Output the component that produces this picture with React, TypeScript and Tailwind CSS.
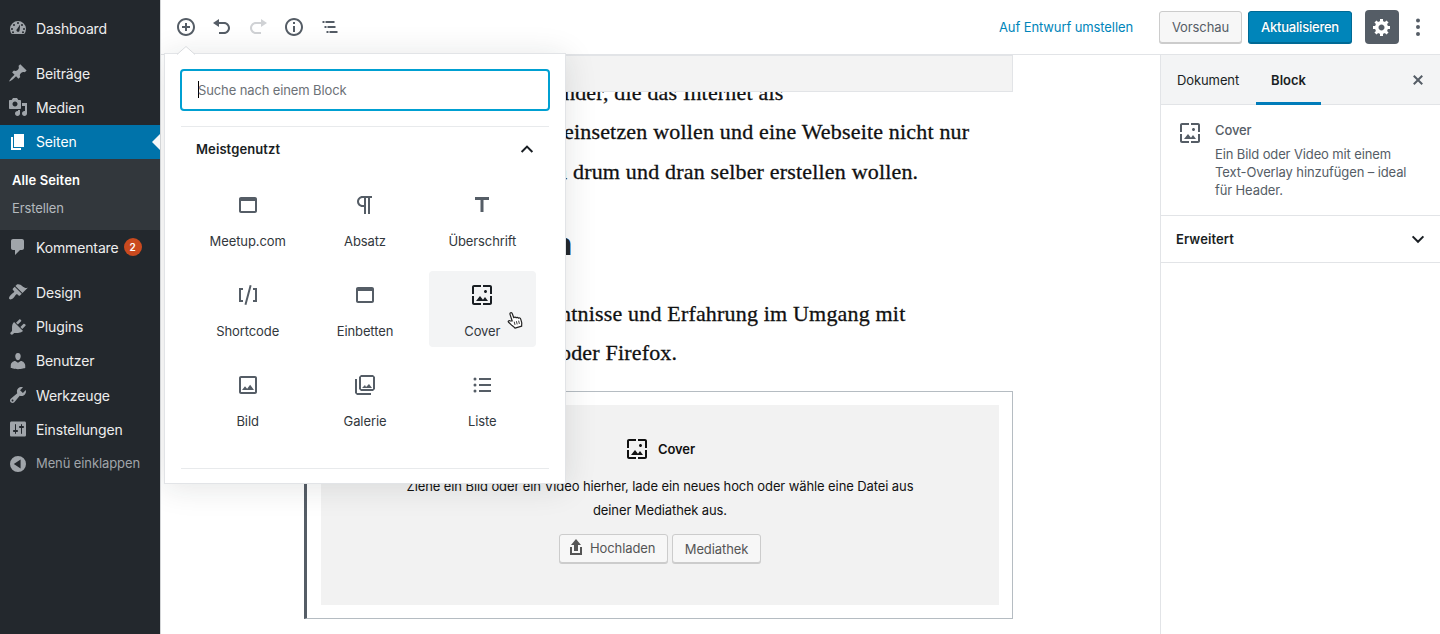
import type { ReactNode } from "react";

const ICONS = {
  dashboard:
    "M3.76 16h12.48A8 8 0 1 0 3.76 16zM10 4a1 1 0 1 1 0 2 1 1 0 0 1 0-2zM6 6a1 1 0 1 1 0 2 1 1 0 0 1 0-2zm8 0a1 1 0 1 1 0 2 1 1 0 0 1 0-2zm-5.37 5.55c.48-.5 3.47-5.15 3.47-5.15s-.36 5.9-.68 6.5c-.35.8-1.25 1.1-2 .8-.9-.35-1.3-1.4-.79-2.15zM4 10a1 1 0 1 1 0 2 1 1 0 0 1 0-2zm12 0a1 1 0 1 1 0 2 1 1 0 0 1 0-2zM5 13.3a1 1 0 1 1 0 2 1 1 0 0 1 0-2zm10 0a1 1 0 1 1 0 2 1 1 0 0 1 0-2z",
  post: "M10.44 3.02l1.82-1.82 6.36 6.35-1.83 1.82c-1.05-.68-2.48-.57-3.41.36l-.75.75c-.92.93-1.04 2.35-.35 3.41l-1.83 1.82-2.41-2.41-2.8 2.79c-.42.42-3.38 2.71-3.8 2.29s1.86-3.39 2.28-3.81l2.79-2.79L4.1 9.36l1.83-1.82c1.05.69 2.48.57 3.4-.36l.75-.75c.93-.92 1.05-2.35.36-3.41z",
  media:
    "M13 11V4c0-.55-.45-1-1-1h-1.67L9 1H5L3.67 3H2c-.55 0-1 .45-1 1v7c0 .55.45 1 1 1h10c.55 0 1-.45 1-1zM7 4.5c1.38 0 2.5 1.12 2.5 2.5S8.38 9.5 7 9.5 4.5 8.38 4.5 7 5.62 4.5 7 4.5zM14 6h5v10.5c0 1.38-1.12 2.5-2.5 2.5S14 17.88 14 16.5s1.12-2.5 2.5-2.5c.17 0 .34.02.5.05V9h-3V6zm-4 8.05V13h2v3.5c0 1.38-1.12 2.5-2.5 2.5S7 17.88 7 16.5 8.12 14 9.5 14c.17 0 .34.02.5.05z",
  page: "M6 15V2h10v13H6zm-1 1h8v2H3V5h2v11z",
  comments:
    "M5 2h9c1.1 0 2 .9 2 2v7c0 1.1-.9 2-2 2h-2l-5 5v-5H5c-1.1 0-2-.9-2-2V4c0-1.1.9-2 2-2z",
  appearance:
    "M14.48 11.06L7.41 3.99l1.5-1.5c.5-.56 2.3-.47 3.51.32 1.21.8 1.43 1.28 2.91 2.1 1.18.64 2.45 1.26 4.45.85zm-.71.71L6.7 4.7 4.93 6.47c-.39.39-.39 1.02 0 1.41l1.06 1.06c.39.39.39 1.03 0 1.42-.6.6-1.43 1.11-2.21 1.69-.35.26-.7.53-1.01.84C1.43 14.23.4 16.08 1.4 17.07c.99 1 2.84-.03 4.18-1.36.31-.31.58-.66.85-1.02.57-.78 1.08-1.61 1.69-2.21.39-.39 1.02-.39 1.41 0l1.06 1.06c.39.39 1.02.39 1.41 0z",
  plugins:
    "M13.11 4.36L9.87 7.6 8 5.73l3.24-3.24c.35-.34 1.05-.2 1.56.32.52.51.66 1.21.31 1.55zm-8 1.77l.91-1.12 9.01 9.01-1.19.84c-.71.71-2.63 1.16-3.82 1.16H6.14L4.9 17.26c-.59.59-1.54.59-2.12 0-.59-.58-.59-1.53 0-2.12l1.24-1.24v-3.88c0-1.13.4-3.19 1.09-3.89zm7.26 3.97l3.24-3.24c.34-.35 1.04-.21 1.55.31.52.51.66 1.21.31 1.55l-3.24 3.25z",
  users:
    "M10 9.25c-2.27 0-2.73-3.44-2.73-3.44C7 4.02 7.82 2 9.97 2c2.16 0 2.98 2.02 2.71 3.81 0 0-.41 3.44-2.68 3.44zm0 2.57L12.72 10c2.39 0 4.52 2.33 4.52 4.53v2.49s-3.65 1.13-7.24 1.13c-3.65 0-7.24-1.13-7.24-1.13v-2.49c0-2.25 1.94-4.48 4.47-4.48z",
  tools:
    "M16.68 9.77c-1.34 1.34-3.3 1.67-4.95.99l-5.41 6.52c-.99.99-2.59.99-3.58 0s-.99-2.59 0-3.57l6.52-5.42c-.68-1.65-.35-3.61.99-4.95 1.28-1.28 3.12-1.62 4.72-1.06l-2.89 2.89 2.82 2.82 2.86-2.87c.53 1.58.18 3.39-1.08 4.65zM3.81 16.21c.4.39 1.04.39 1.43 0 .4-.4.4-1.04 0-1.43-.39-.4-1.03-.4-1.43 0-.39.39-.39 1.03 0 1.43z",
  settings:
    "M18 16V4c0-.9-.5-1.6-1.6-1.6H3.6C2.5 2.4 2 3.1 2 4v12c0 1 .6 1.6 1.6 1.6h12.8c1 0 1.6-.6 1.6-1.6zM8 11h1c.55 0 1 .45 1 1s-.45 1-1 1H8v1.5c0 .28-.22.5-.5.5s-.5-.22-.5-.5V13H6c-.55 0-1-.45-1-1s.45-1 1-1h1V5.5c0-.28.22-.5.5-.5s.5.22.5.5V11zm5-2h-1c-.55 0-1-.45-1-1s.45-1 1-1h1V5.5c0-.28.22-.5.5-.5s.5.22.5.5V7h1c.55 0 1 .45 1 1s-.45 1-1 1h-1v5.5c0 .28-.22.5-.5.5s-.5-.22-.5-.5V9z",
  collapse:
    "M10 2a8 8 0 1 1 0 16 8 8 0 0 1 0-16zm2.6 3.6L5.8 10l6.8 4.4z",
  insert:
    "M10 1c-5 0-9 4-9 9s4 9 9 9 9-4 9-9-4-9-9-9zm0 16c-3.9 0-7-3.1-7-7s3.1-7 7-7 7 3.1 7 7-3.1 7-7 7zm1-11H9v3H6v2h3v3h2v-3h3V9h-3V6z",
  undo: "M12 5H7V2L1 6l6 4V7h5c2.2 0 4 1.8 4 4s-1.8 4-4 4H7v2h5c3.3 0 6-2.7 6-6s-2.7-6-6-6z",
  redo: "M8 5h5V2l6 4-6 4V7H8c-2.2 0-4 1.8-4 4s1.8 4 4 4h5v2H8c-3.3 0-6-2.7-6-6s2.7-6 6-6z",
  info: "M10 1c-5 0-9 4-9 9s4 9 9 9 9-4 9-9-4-9-9-9zm0 16c-3.9 0-7-3.1-7-7s3.1-7 7-7 7 3.1 7 7-3.1 7-7 7zM9 9h2v6H9zm0-4h2v2H9z",
  outline:
    "M2.5 4h2v2h-2zm3 0h9v2h-9zM4.5 9h2v2h-2zm3 0h8v2h-8zM6.5 14h2v2h-2zm3 0h8v2h-8z",
  generic:
    "M18 12h-2.18c-.17.7-.44 1.35-.81 1.93l1.54 1.54-2.1 2.1-1.54-1.54c-.58.36-1.23.63-1.91.79V19H8v-2.18c-.68-.16-1.33-.43-1.91-.79l-1.54 1.54-2.12-2.12 1.54-1.54c-.36-.58-.63-1.23-.79-1.91H1V9.03h2.17c.16-.7.44-1.35.8-1.94L2.43 5.55l2.1-2.1 1.54 1.54c.58-.37 1.24-.64 1.93-.81V2h3v2.18c.68.16 1.33.43 1.91.79l1.54-1.54 2.12 2.12-1.54 1.54c.36.59.64 1.24.8 1.94H18V12zm-8.5 1.5c1.66 0 3-1.34 3-3s-1.34-3-3-3-3 1.34-3 3 1.34 3 3 3z",
  more: "M10 1.4a2 2 0 1 1 0 4 2 2 0 0 1 0-4zm0 6.6a2 2 0 1 1 0 4 2 2 0 0 1 0-4zm0 6.9a2 2 0 1 1 0 4 2 2 0 0 1 0-4z",
  close:
    "M14.95 6.46L11.41 10l3.54 3.54-1.41 1.41L10 11.42l-3.53 3.53-1.42-1.42L8.58 10 5.05 6.47l1.42-1.42L10 8.58l3.54-3.53z",
  upload: "M8 14V8H5l5-6 5 6h-3v6H8zm-2 2v-6H4v8h12.01v-8H14v6H6z",
};

const BLOCK_ICONS = {
  cover:
    "M4 4h7V2H4c-1.1 0-2 .9-2 2v7h2V4zm6 9l-4 5h12l-3-4-2.03 2.71L10 13zm7-4.5c0-.83-.67-1.5-1.5-1.5S14 7.67 14 8.5s.67 1.5 1.5 1.5S17 9.33 17 8.5zM20 2h-7v2h7v7h2V4c0-1.1-.9-2-2-2zm0 18h-7v2h7c1.1 0 2-.9 2-2v-7h-2v7zM4 13H2v7c0 1.1.9 2 2 2h7v-2H4v-7z",
  embed:
    "M19 4H5c-1.11 0-2 .9-2 2v12c0 1.1.89 2 2 2h14c1.1 0 2-.9 2-2V6c0-1.1-.89-2-2-2zm0 14H5V8h14v10z",
  paragraph:
    "M11 5v7H9.5C7.6 12 6 10.4 6 8.5S7.6 5 9.5 5H11m8-2H9.5C6.5 3 4 5.5 4 8.5S6.5 14 9.5 14H11v7h2V5h2v16h2V5h2V3z",
  heading: "M5 4v3h5.5v12h3V7H19V4z",
  shortcode:
    "M8.5 21.4l1.9.5 5.2-19.3-1.9-.5-5.2 19.3zM3 19h4v-2H5V7h2V5H3v14zM17 5v2h2v10h-2v2h4V5h-4z",
  image:
    "M19 5v14H5V5h14m0-2H5c-1.1 0-2 .9-2 2v14c0 1.1.9 2 2 2h14c1.1 0 2-.9 2-2V5c0-1.1-.9-2-2-2zm-4.86 8.86l-3 3.87L9 13.14 6 17h12l-3.86-5.14z",
  gallery:
    "M20 4v12H8V4h12m0-2H8L6 4v12l2 2h12l2-2V4l-2-2zM12 12l1 2 3-3 3 4H9zM2 6v14l2 2h14v-2H4V6H2z",
  list: "M9 19h12v-2H9v2zm0-6h12v-2H9v2zm0-8v2h12V5H9zM5 4.5a1.5 1.5 0 1 0 0 3 1.5 1.5 0 0 0 0-3zm0 6a1.5 1.5 0 1 0 0 3 1.5 1.5 0 0 0 0-3zm0 6a1.5 1.5 0 1 0 0 3 1.5 1.5 0 0 0 0-3z",
};

function Icon({ name, className = "size-5" }: { name: keyof typeof ICONS; className?: string }) {
  return (
    <svg viewBox="0 0 20 20" fill="currentColor" className={`shrink-0 ${className}`}>
      <path fillRule="evenodd" d={ICONS[name]} />
    </svg>
  );
}

function BlockIcon({ name, className = "" }: { name: keyof typeof BLOCK_ICONS; className?: string }) {
  return (
    <svg viewBox="0 0 24 24" fill="currentColor" className={`size-6 shrink-0 ${className}`}>
      <path fillRule={name === "heading" ? "nonzero" : "evenodd"} d={BLOCK_ICONS[name]} />
    </svg>
  );
}

function Chevron({ up = false }: { up?: boolean }) {
  return (
    <svg viewBox="0 0 20 20" fill="none" stroke="currentColor" strokeWidth="2" className="size-5">
      <path d={up ? "M4.6 12L10 6.6l5.4 5.4" : "M4.6 7.4L10 12.8l5.4-5.4"} />
    </svg>
  );
}

function MenuItem({ icon, children }: { icon: keyof typeof ICONS; children: ReactNode }) {
  return (
    <li className="flex h-[34.2px] items-center gap-2 pl-2">
      <Icon name={icon} className="size-5 text-[#a0a5aa]" />
      <span className="flex items-center text-[14px] tracking-[-0.14px]">{children}</span>
    </li>
  );
}

function Sidebar() {
  return (
    <nav className="relative z-20 w-[160px] shrink-0 bg-[#23282d] pt-[11px] text-[#eee] shadow-[1px_0_0_#d3d5d7]">
      <ul>
        <MenuItem icon="dashboard">Dashboard</MenuItem>
      </ul>
      <ul className="mt-[11px]">
        <MenuItem icon="post">Beiträge</MenuItem>
        <MenuItem icon="media">Medien</MenuItem>
        <li className="relative flex h-[34px] items-center gap-2 bg-[#0073aa] pl-2 text-white">
          <Icon name="page" />
          <span className="text-[14px] tracking-[-0.14px]">Seiten</span>
          <svg viewBox="0 0 8 16" className="absolute top-[9px] right-0 h-4 w-2" fill="#f8f8f8">
            <path d="M8 0v16L0 8z" />
          </svg>
        </li>
      </ul>
      <ul className="h-[71.6px] bg-[#32373c] pt-[7px] pl-3 text-[13px] leading-7">
        <li className="font-semibold tracking-[0.1px] text-white">Alle Seiten</li>
        <li className="tracking-[-0.1px] text-[#b4b9be]">Erstellen</li>
      </ul>
      <ul>
        <MenuItem icon="comments">
          Kommentare
          <span className="ml-[5px] flex size-[18px] items-center justify-center rounded-full bg-[#ca4a1f] text-[10px] font-semibold text-white">
            2
          </span>
        </MenuItem>
      </ul>
      <ul className="mt-[11px]">
        <MenuItem icon="appearance">Design</MenuItem>
        <MenuItem icon="plugins">Plugins</MenuItem>
        <MenuItem icon="users">Benutzer</MenuItem>
        <MenuItem icon="tools">Werkzeuge</MenuItem>
        <MenuItem icon="settings">Einstellungen</MenuItem>
      </ul>
      <div className="flex h-[35px] items-center gap-2 pl-2 text-[#a0a5aa]">
        <Icon name="collapse" />
        <span className="text-[13px] tracking-[-0.1px]">Menü einklappen</span>
      </div>
    </nav>
  );
}

function TopBar() {
  return (
    <header className="flex h-[55px] shrink-0 items-center justify-between border-b border-[#e2e4e7] pr-[12px] pl-[16px] text-[#555d66]">
      <div className="flex gap-4">
        <Icon name="insert" />
        <Icon name="undo" />
        <Icon name="redo" className="size-5 text-[#d0d2d5]" />
        <Icon name="info" />
        <Icon name="outline" />
      </div>
      <div className="flex items-center text-[13px] tracking-[-0.1px]">
        <span className="mr-[26px] pt-px text-[#0085ba]">Auf Entwurf umstellen</span>
        <button className="mr-[6px] mb-px h-[32px] w-[83px] rounded-[3px] border border-[#ccc] bg-[#f7f7f7] pt-[3px] shadow-[0_1px_0_#ccc]">
          Vorschau
        </button>
        <button className="mr-[13px] mb-px h-[32px] w-[104px] rounded-[3px] border border-[#006a95] bg-[#0085ba] pt-[3px] font-medium tracking-[-0.22px] text-white shadow-[0_1px_0_#006a95] [text-shadow:0_-1px_1px_#006a95]">
          Aktualisieren
        </button>
        <span className="mr-[9px] flex size-[34px] items-center justify-center rounded-[4px] bg-[#555d66] text-white">
          <Icon name="generic" />
        </span>
        <Icon name="more" />
      </div>
    </header>
  );
}

function EditorCanvas() {
  return (
    <main className="w-[1000px] shrink-0 overflow-hidden pl-[143px] text-[#111]">
      <div className="relative z-[1] h-[37px] w-[710px] border border-[#e2e4e7] bg-[#f3f3f3]" />
      <div className="-mt-[19px] pl-[252px] font-['Liberation_Serif',serif] text-[22px] leading-[39.3px] tracking-[0.18px] whitespace-nowrap [-webkit-text-stroke:0.3px_#111]">
        <p className="pl-[9px]">nder, die das Internet als</p>
        <p className="pl-[9px]">einsetzen wollen und eine Webseite nicht nur</p>
        <p className="-ml-[5px]">m drum und dran selber erstellen wollen.</p>
      </div>
      <h2 className="mt-[33px] w-[269px] text-right text-[30px] leading-[40px] font-extrabold text-[#23282d]">n</h2>
      <div className="mt-[30px] pl-[252px] font-['Liberation_Serif',serif] text-[22px] leading-[39.3px] tracking-[0.18px] whitespace-nowrap [-webkit-text-stroke:0.3px_#111]">
        <p className="pl-[5px]">ntnisse und Erfahrung im Umgang mit</p>
        <p className="pl-[5px]">oder Firefox.</p>
      </div>
      <section className="mt-[19px] ml-px h-[228px] w-[709px] border border-l-[3px] border-[#b5bcc2] border-l-[#555d66] py-[13px] pr-[13px] pl-[14px]">
        <div className="flex h-[200px] flex-col items-center bg-[#f2f2f2] pt-[32px]">
          <div className="flex items-center gap-[9px] text-[13px] font-semibold tracking-[-0.1px]">
            <BlockIcon name="cover" />
            <span className="pt-px">Cover</span>
          </div>
          <p className="mt-[14px] w-[520px] text-center text-[13px] leading-[23.6px] tracking-[-0.1px]">
            Ziehe ein Bild oder ein Video hierher, lade ein neues hoch oder wähle eine Datei aus deiner Mediathek aus.
          </p>
          <div className="mt-[11px] flex gap-1 text-[13px] tracking-[-0.1px] text-[#555]">
            <button className="flex h-[29px] w-[109px] items-center gap-1 rounded-[3px] border border-[#ccc] bg-[#f7f7f7] pl-[6px] shadow-[0_1px_0_#ccc]">
              <Icon name="upload" className="-mt-[3px] size-5" />
              <span className="pt-px">Hochladen</span>
            </button>
            <button className="h-[29px] w-[89px] rounded-[3px] border border-[#ccc] bg-[#f7f7f7] pt-[3px] shadow-[0_1px_0_#ccc]">
              Mediathek
            </button>
          </div>
        </div>
      </section>
    </main>
  );
}

function SettingsPanel() {
  return (
    <aside className="w-[280px] shrink-0 border-l border-[#e2e4e7] text-[13px]">
      <div className="flex h-[50px] items-center border-b border-[#e2e4e7] bg-[#f3f4f5] pr-[12px] pl-4 text-[#191e23]">
        <span className="w-[79px] pt-[3px] tracking-[-0.1px]">Dokument</span>
        <span className="flex h-[50px] w-[65px] items-center justify-center border-b-[3px] border-[#007cba] pt-[6px] font-semibold">
          Block
        </span>
        <Icon name="close" className="ml-auto size-5 text-[#555d66]" />
      </div>
      <div className="flex h-[111px] gap-[13px] border-b border-[#e2e4e7] pt-4 pl-[17px] leading-[18px] tracking-[-0.12px] text-[#555d66]">
        <BlockIcon name="cover" />
        <div>
          <p className="mb-[6px] font-medium">Cover</p>
          <p className="w-[210px]">
            Ein Bild oder Video mit einem
            <br />
            Text-Overlay hinzufügen – ideal
            <br />
            für Header.
          </p>
        </div>
      </div>
      <div className="flex h-[47px] items-center justify-between border-b border-[#e2e4e7] pr-[12px] pl-[15px] font-semibold tracking-[0.1px] text-[#191e23]">
        <span className="pt-[2px]">Erweitert</span>
        <Chevron />
      </div>
    </aside>
  );
}

const BLOCKS: { icon: keyof typeof BLOCK_ICONS; label: string }[] = [
  { icon: "embed", label: "Meetup.com" },
  { icon: "paragraph", label: "Absatz" },
  { icon: "heading", label: "Überschrift" },
  { icon: "shortcode", label: "Shortcode" },
  { icon: "embed", label: "Einbetten" },
  { icon: "cover", label: "Cover" },
  { icon: "image", label: "Bild" },
  { icon: "gallery", label: "Galerie" },
  { icon: "list", label: "Liste" },
];

function HandCursor() {
  return (
    <svg viewBox="0 0 16 18" className="absolute top-[40px] left-[78px] h-[18px] w-4">
      <path
        d="M5.2 10L3.1 3.6C2.4 1.6 4.6.8 5.3 2.7l1.5 4c.7-.9 1.9-.7 2.3.1.7-.8 1.9-.5 2.3.4.9-.6 2-.1 2.3.9l.9 3c.4 1.3-.1 2.4.1 4.1l-6.7 1.9c-1-1.6-2.2-2-3.4-3L1.6 11.3c-1-1.1.4-2.2 1.4-1.5z"
        fill="#fff"
        stroke="#222"
        strokeWidth="1.2"
        strokeLinejoin="round"
      />
      <path d="M7.2 10.7l.8 3.2M9.4 10.2l.8 3.2M11.6 9.7l.8 3.2" stroke="#222" strokeWidth="0.9" />
    </svg>
  );
}

function Inserter() {
  return (
    <div className="absolute top-[53px] left-[164px] z-10 h-[431px] w-[402px] border border-[#e2e4e7] bg-white px-[15px] pt-[14.5px] shadow-[0_3px_30px_rgba(25,30,35,0.12)]">
      <svg viewBox="0 0 18 9" className="absolute -top-[9px] left-[12px] h-[10px] w-[18px]" fill="#fff">
        <path d="M0 9l9-8 9 8" stroke="#d9dbde" />
      </svg>
      <div className="flex h-[42px] items-center rounded-[4px] border-2 border-[#00a0d2] pl-4 text-[13px] tracking-[-0.12px] text-[#6c7177]">
        <span className="-mr-px h-[17px] w-px bg-black" />
        <span className="pt-[2px]">Suche nach einem Block</span>
      </div>
      <div className="mx-px mt-[15px] h-[343px] border-y-[1.5px] border-[#e8eaec]">
        <div className="flex h-[47px] items-center justify-between pr-[12px] pl-[15px] text-[13px] font-semibold tracking-[0.1px] text-[#191e23]">
          Meistgenutzt
          <Chevron up />
        </div>
        <ul className="ml-[13px] grid w-[342px] grid-cols-3 gap-x-[10px] gap-y-[14px] pt-[7px] tracking-[-0.1px]">
          {BLOCKS.map(({ icon, label }) => (
            <li
              key={label}
              className={
                label === "Cover"
                  ? "relative flex h-[76px] flex-col items-center rounded-[4px] bg-[#f3f4f5] pt-[12px] text-[#191e23]"
                  : "relative flex h-[76px] flex-col items-center pt-[12px] text-[#555d66]"
              }
            >
              <BlockIcon name={icon} />
              <span className="mt-[14px] text-[13px] leading-5 text-[#32373c]">{label}</span>
              {label === "Cover" && <HandCursor />}
            </li>
          ))}
        </ul>
      </div>
    </div>
  );
}

export default function App() {
  return (
    <div className="relative flex h-[634px] w-[1440px] overflow-hidden bg-white font-['Inter',sans-serif]">
      <Sidebar />
      <div className="flex min-w-0 flex-1 flex-col">
        <TopBar />
        <div className="flex min-h-0 flex-1">
          <EditorCanvas />
          <SettingsPanel />
        </div>
      </div>
      <Inserter />
    </div>
  );
}
